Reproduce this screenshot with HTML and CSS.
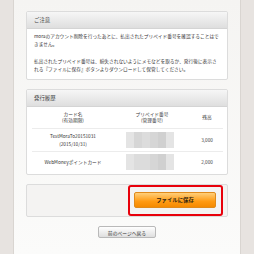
FILE: index.html
```html
<!DOCTYPE html>
<html lang="ja">
<head>
<meta charset="utf-8">
<link rel="stylesheet" href="styles.css">
</head>
<body>
<div class="page">
  <section class="box">
    <div class="box-head">ご注意</div>
    <div class="box-body notice">
      <p>moraのアカウント削除を行ったあとに、払出されたプリペイド番号を確認することはできません。</p>
      <p>払出されたプリペイド番号は、紛失されないようにメモなどを取るか、発行後に表示される『ファイルに保存』ボタンよりダウンロードして保管してください。</p>
    </div>
  </section>

  <section class="box history">
    <div class="box-head">発行履歴</div>
    <div class="table">
      <div class="row head-row">
        <div class="c1">カード名<br>(有効期限)</div>
        <div class="c2">プリペイド番号<br>(管理番号)</div>
        <div class="c3">残高</div>
      </div>
      <div class="row row1">
        <div class="c1 lines">TestMoraTo20151031<br>(2015/10/31)</div>
        <div class="c2"><div class="blur"><span class="g1"></span><span class="g2"></span><span class="g3"></span><span class="g2"></span><span class="g4"></span><span class="g1"></span></div></div>
        <div class="c3">3,000</div>
      </div>
      <div class="row row2">
        <div class="c1">WebMoneyポイントカード</div>
        <div class="c2"><div class="blur"><span class="g1"></span><span class="g3"></span><span class="g3"></span><span class="g2"></span><span class="g4"></span><span class="g1"></span></div></div>
        <div class="c3">2,000</div>
      </div>
    </div>
  </section>

  <section class="box actions">
    <div class="highlight">
      <button class="save">ファイルに保存</button>
    </div>
  </section>

  <div class="back-wrap">
    <button class="back">前のページへ戻る</button>
  </div>
</div>
</body>
</html>
```

FILE: styles.css
```css
html, body {
  margin: 0;
  padding: 0;
}
body {
  background: #e7e3e0;
  font-family: "Noto Sans CJK JP", "Noto Sans", sans-serif;
  color: #333;
  font-size: 4.7px;
  height: 254px;
  overflow: hidden;
}
.page {
  margin-left: 13px;
  width: 228px;
  min-height: 254px;
  box-sizing: border-box;
  border-left: 1px solid #d9d5d1;
  border-right: 1px solid #d9d5d1;
  background: linear-gradient(#f5f4f2, #fbfbfa);
  padding: 11px 12px 0 12px;
}
.box {
  border: 1px solid #dcdcdc;
  border-radius: 2px;
  background: #fff;
  margin-bottom: 9px;
}
.box-head {
  height: 16px;
  line-height: 16px;
  padding-left: 7px;
  font-size: 5.4px;
  color: #444;
  background: linear-gradient(#f6f6f6, #dedede);
  border-bottom: 1px solid #d4d4d4;
  border-radius: 2px 2px 0 0;
}
.notice {
  padding: 3px 7px 6px 7px;
  line-height: 8.2px;
}
.notice p {
  margin: 0;
}
.notice p + p {
  margin-top: 8.6px;
}
.table {
  padding: 0 4px 2px 5px;
  text-align: center;
}
.row {
  display: grid;
  grid-template-columns: 82px 76px 34px;
  align-items: center;
}
.head-row {
  height: 21px;
  line-height: 5.8px;
  border-bottom: 1px solid #ececec;
  color: #3a3a3a;
}
.row1 {
  height: 22px;
  border-bottom: 1px solid #ececec;
}
.row2 {
  height: 20px;
}
.lines {
  line-height: 8.6px;
}
.c2 {
  display: flex;
  justify-content: center;
}
.blur {
  width: 48px;
  height: 16px;
  display: flex;
  margin-left: -4px;
  filter: blur(0.6px);
}
.blur span {
  flex: 1;
}
.g1 { background: #e4e4e4; }
.g2 { background: #d6d6d6; }
.g3 { background: #dcdcdc; }
.g4 { background: #d0d0d0; }
.c3 {
  color: #444;
}
.actions {
  height: 31px;
  background: #f4f3f2;
  display: flex;
  justify-content: flex-end;
  align-items: center;
  padding-right: 4px;
}
.highlight {
  width: 95px;
  height: 31px;
  box-sizing: border-box;
  border: 2px solid #e8000b;
  border-radius: 3px;
  display: flex;
  align-items: center;
  justify-content: flex-end;
  padding: 0 5px 1px 0;
}
.save {
  width: 82px;
  height: 16px;
  border: 1px solid #e08a1a;
  border-radius: 2px;
  background: linear-gradient(#ffcf7a, #ff9a12 60%, #f58a00);
  font-family: inherit;
  font-size: 5.4px;
  font-weight: bold;
  color: #2e2210;
  padding: 0;
}
.back-wrap {
  display: flex;
  justify-content: center;
}
.back {
  width: 58px;
  height: 12px;
  border: 1px solid #b9b9b9;
  border-radius: 2px;
  background: linear-gradient(#ffffff, #dedede);
  font-family: inherit;
  font-size: 4.8px;
  color: #333;
  padding: 0;
}
```
